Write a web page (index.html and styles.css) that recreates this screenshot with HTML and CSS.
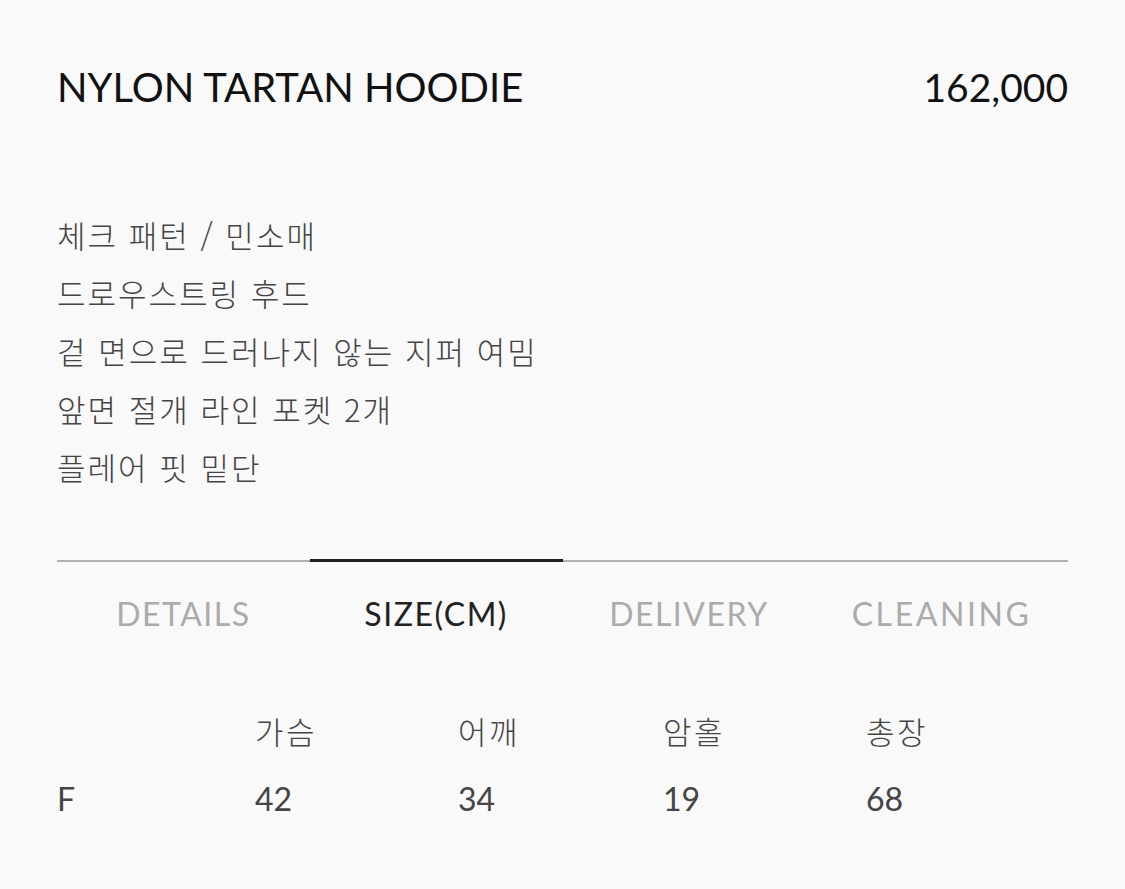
FILE: index.html
```html
<!DOCTYPE html>
<html lang="ko">
<head>
<meta charset="utf-8">
<title>NYLON TARTAN HOODIE</title>
<link rel="stylesheet" href="styles.css">
</head>
<body>
<main class="page">
  <header class="product-head">
    <h1 class="product-name">NYLON TARTAN HOODIE</h1>
    <div class="product-price">162,000</div>
  </header>
  <ul class="desc">
    <li>체크 패턴 / 민소매</li>
    <li>드로우스트링 후드</li>
    <li>겉 면으로 드러나지 않는 지퍼 여밈</li>
    <li>앞면 절개 라인 포켓 2개</li>
    <li>플레어 핏 밑단</li>
  </ul>
  <nav class="tabs">
    <div class="tab">DETAILS</div>
    <div class="tab active">SIZE(CM)</div>
    <div class="tab">DELIVERY</div>
    <div class="tab wide">CLEANING</div>
  </nav>
  <div class="size-table">
    <div class="cell head"></div>
    <div class="cell head">가슴</div>
    <div class="cell head">어깨</div>
    <div class="cell head">암홀</div>
    <div class="cell head">총장</div>
    <div class="cell val">F</div>
    <div class="cell val">42</div>
    <div class="cell val">34</div>
    <div class="cell val">19</div>
    <div class="cell val">68</div>
  </div>
</main>
</body>
</html>
```
FILE: styles.css
```css
html, body {
  margin: 0;
  padding: 0;
  background: #f9f9f9;
}
.page {
  padding: 0 57px;
  font-family: "Lato", "Noto Sans CJK KR", sans-serif;
}
.product-head {
  display: flex;
  justify-content: space-between;
  align-items: center;
  margin-top: 67px;
  height: 40px;
}
.product-name {
  margin: 0;
  font-size: 40px;
  line-height: 40px;
  font-weight: 400;
  letter-spacing: 0;
  color: #111;
}
.product-price {
  font-size: 39px;
  line-height: 40px;
  color: #111;
}
.desc {
  list-style: none;
  margin: 99px 0 0;
  padding: 0;
  font-family: "Noto Sans CJK KR", sans-serif;
  font-size: 31px;
  line-height: 58px;
  letter-spacing: 2px;
  color: #444;
  font-weight: 300;
}
.tabs {
  display: flex;
  align-items: flex-start;
  margin-top: 63px;
}
.tab {
  flex: 1;
  text-align: center;
  margin-top: 1px;
  border-top: 2px solid #b0b0b0;
  padding-top: 36px;
  font-size: 32px;
  line-height: 32px;
  letter-spacing: 1.5px;
  color: #ababab;
}
.tab.active {
  margin-top: 0;
  border-top: 3px solid #1e1e1e;
  color: #222;
}
.tab.wide {
  letter-spacing: 2.6px;
}
.size-table {
  display: grid;
  grid-template-columns: 198px 203px 205px 203px auto;
  grid-auto-rows: 68px;
  margin-top: 66px;
}
.cell {
  display: flex;
  align-items: center;
  color: #444;
}
.cell.head {
  font-family: "Noto Sans CJK KR", sans-serif;
  font-size: 31px;
  letter-spacing: 2.5px;
  font-weight: 300;
}
.cell.val {
  font-size: 32px;
}
```
